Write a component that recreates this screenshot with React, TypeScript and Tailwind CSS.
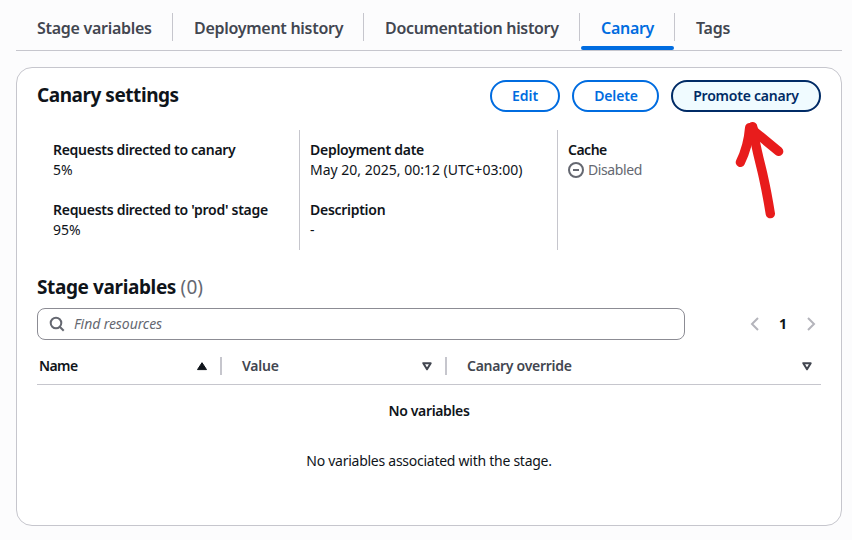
const tabs = [
  { label: "Stage variables", cell: "w-[157px]", tracking: "tracking-[-0.28px]" },
  { label: "Deployment history", cell: "w-[191px]", tracking: "tracking-[-0.28px]" },
  { label: "Documentation history", cell: "w-[216px]", tracking: "tracking-[-0.33px]" },
  { label: "Canary", cell: "w-[95px]", tracking: "tracking-[-0.3px]", active: true },
  { label: "Tags", cell: "w-[80px]", tracking: "tracking-[-0.27px]", last: true },
];

function Tabs() {
  return (
    <div className="flex h-[51px] border-b border-[#c6c6cd] pt-[13px]">
      {tabs.map((t) => (
        <div key={t.label} className={`flex flex-col ${t.cell}`}>
          <div
            className={`flex h-7 items-center pt-px pl-[21px] text-[16px] font-semibold whitespace-nowrap ${t.tracking} ${
              t.active ? "text-[#006ce0]" : "text-[#424650]"
            } ${t.last ? "" : "border-r border-[#c6c6cd]"}`}
          >
            {t.label}
          </div>
          {t.active && <div className="mt-[5px] mr-px ml-px h-1 rounded-[2px] bg-[#006ce0]" />}
        </div>
      ))}
    </div>
  );
}

function Field({ label, tracking, children }: { label: string; tracking: string; children: React.ReactNode }) {
  return (
    <div>
      <div className={`font-semibold ${tracking}`}>{label}</div>
      <div className="flex items-center">{children}</div>
    </div>
  );
}

function SortDown() {
  return (
    <svg width="10" height="9" viewBox="0 0 10 9" fill="none" stroke="#424650" strokeWidth="2" strokeLinejoin="round">
      <path d="M1.3 1.2h7.4L5 7.3z" />
    </svg>
  );
}

function SortUp() {
  return (
    <svg width="10" height="9" viewBox="0 0 10 9" fill="#0f141a" stroke="#0f141a" strokeLinejoin="round">
      <path d="M5 .7 9.5 7.6h-9z" />
    </svg>
  );
}

export default function App() {
  return (
    <div className="relative h-[540px] w-[852px] overflow-hidden bg-[#fcfcfd] pr-[10px] pl-4 font-['Noto_Sans',sans-serif] text-[14px] leading-5 text-[#0f141a]">
      <Tabs />
      <section className="mt-4 h-[459px] rounded-[16px] border border-[#c6c6cd] bg-white px-5 pt-3">
        <header className="flex h-8 items-center justify-between">
          <h2 className="pb-[2px] text-[19px] font-bold tracking-[-0.46px]">Canary settings</h2>
          <div className="flex gap-3 font-semibold">
            <button className="h-8 w-[70px] rounded-full border-2 border-[#006ce0] text-[#006ce0]">Edit</button>
            <button className="h-8 w-[87px] rounded-full border-2 border-[#006ce0] pl-px tracking-[-0.18px] text-[#006ce0]">
              Delete
            </button>
            <button className="h-8 w-[150px] rounded-full border-2 border-[#002b66] bg-[#f0fbff] tracking-[-0.23px] text-[#002b66]">
              Promote canary
            </button>
          </div>
        </header>

        <div className="mt-[18px] flex h-[120px]">
          <div className="flex w-[263px] flex-col gap-5 border-r border-[#c6c6cd] py-[10px] pl-4">
            <Field label="Requests directed to canary" tracking="tracking-[-0.29px]">5%</Field>
            <Field label="Requests directed to 'prod' stage" tracking="tracking-[-0.28px]">95%</Field>
          </div>
          <div className="flex w-[258px] flex-col gap-5 border-r border-[#c6c6cd] py-[10px] pl-[10px]">
            <Field label="Deployment date" tracking="tracking-[-0.26px]">May 20, 2025, 00:12 (UTC+03:00)</Field>
            <Field label="Description" tracking="tracking-[-0.28px]">-</Field>
          </div>
          <div className="py-[10px] pl-[10px]">
            <Field label="Cache" tracking="tracking-[-0.5px]">
              <svg className="mr-1" width="16" height="16" viewBox="0 0 16 16" fill="none" stroke="#656871" strokeWidth="2">
                <circle cx="8" cy="8" r="7" />
                <path d="M5 8h6" />
              </svg>
              <span className="tracking-[-0.4px] text-[#656871]">Disabled</span>
            </Field>
          </div>
        </div>

        <h2 className="mt-6 h-[26px] text-[19px] leading-[26px] font-bold tracking-[-0.38px]">
          Stage variables <span className="font-normal tracking-[0.1px] text-[#656871]">(0)</span>
        </h2>

        <div className="mt-2 flex items-center justify-between">
          <div className="flex h-8 w-[648px] items-center rounded-lg border border-[#8c8c94] pl-[11px]">
            <svg width="16" height="16" viewBox="0 0 16 16" fill="none" stroke="#656871" strokeWidth="2">
              <circle cx="7" cy="7" r="5.3" />
              <path d="m10.7 10.7 4 4" />
            </svg>
            <span className="ml-[9px] tracking-[-0.08px] text-[#656871] italic">Find resources</span>
          </div>
          <div className="mr-[5px] flex items-center">
            <svg width="9" height="14" viewBox="0 0 9 14" fill="none" stroke="#b4b4bb" strokeWidth="2">
              <path d="M8 1 2 7l6 6" />
            </svg>
            <span className="w-[48px] text-center font-bold">1</span>
            <svg width="9" height="14" viewBox="0 0 9 14" fill="none" stroke="#b4b4bb" strokeWidth="2">
              <path d="m1 1 6 6-6 6" />
            </svg>
          </div>
        </div>

        <div className="flex h-[45px] items-center border-b border-[#c6c6cd] pt-2 font-semibold">
          <div className="flex h-[18px] w-[185px] items-center justify-between border-r-2 border-[#c6c6cd] pr-[13px] pl-[2px]">
            <span className="tracking-[-0.6px]">Name</span>
            <SortUp />
          </div>
          <div className="flex h-[18px] w-[225px] items-center justify-between border-r-2 border-[#c6c6cd] pr-[13px] pl-[20px] text-[#424650]">
            <span className="tracking-[-0.2px]">Value</span>
            <SortDown />
          </div>
          <div className="flex h-[18px] flex-1 items-center justify-between pr-[9px] pl-[20px] text-[#424650]">
            <span className="tracking-[-0.29px]">Canary override</span>
            <SortDown />
          </div>
        </div>

        <div className="flex flex-col items-center gap-[30px] pt-4">
          <div className="font-semibold tracking-[-0.36px]">No variables</div>
          <div className="tracking-[-0.26px]">No variables associated with the stage.</div>
        </div>
      </section>

      <svg
        className="absolute top-[110px] left-[700px]"
        width="120"
        height="120"
        viewBox="0 0 360 360"
        fill="none"
        stroke="#e81c1c"
        strokeWidth="28"
        strokeLinecap="round"
        strokeLinejoin="round"
      >
        <path d="M158 50C166 110 180 155 190 200C199 240 206 280 211 311" />
        <path d="M149 53C146 92 136 127 121 157" />
        <path d="M158 60C185 82 212 104 236 124" />
        <path d="M149 53 150 80 175 80 158 50z" fill="#e81c1c" strokeWidth="22" />
      </svg>
    </div>
  );
}
